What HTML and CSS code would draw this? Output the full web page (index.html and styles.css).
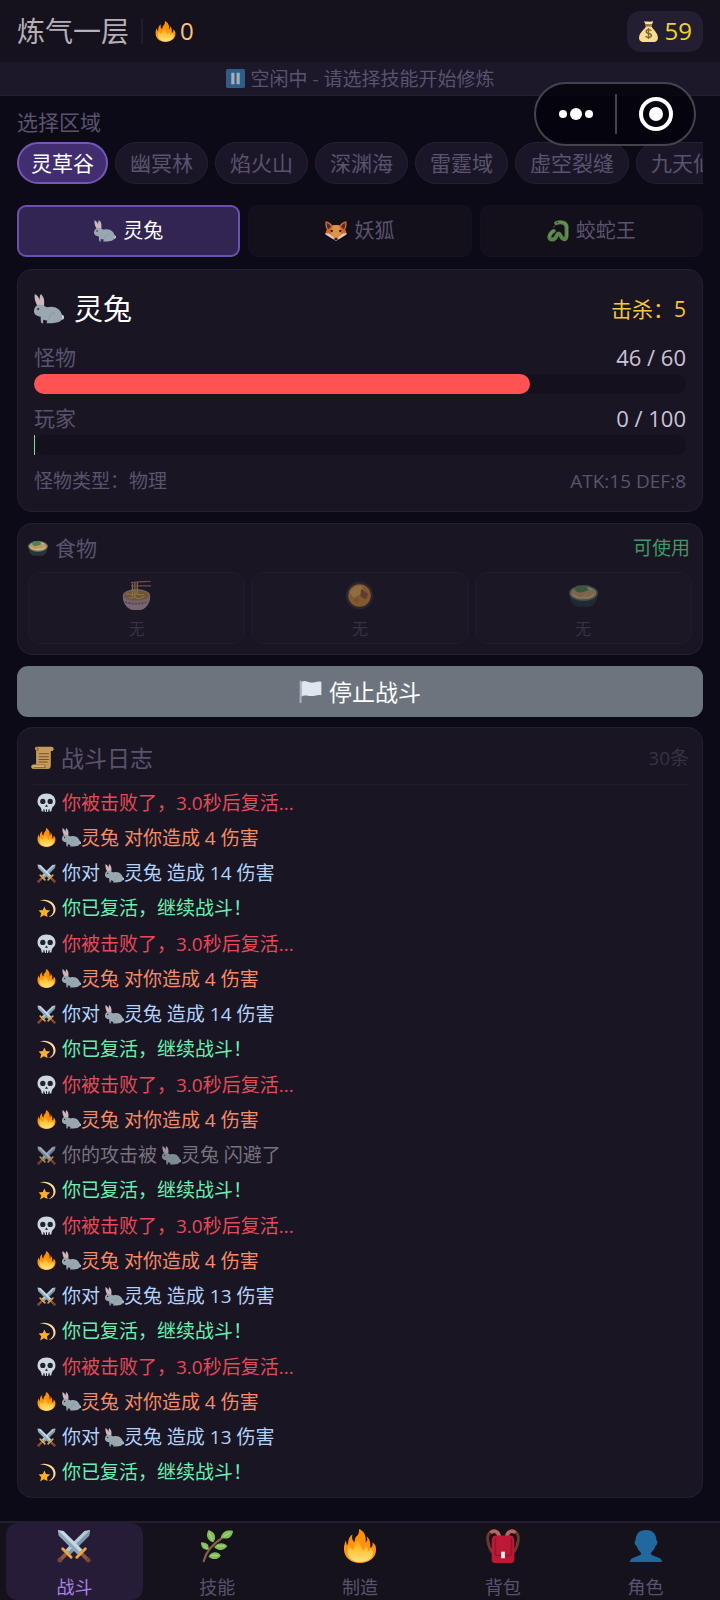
FILE: index.html
```html
<!DOCTYPE html>
<html lang="zh-CN">
<head>
<meta charset="utf-8">
<meta name="viewport" content="width=device-width, initial-scale=1">
<title>战斗</title>
<link rel="stylesheet" href="styles.css">
</head>
<body>
<svg class="sprite" aria-hidden="true">
  <defs>
    <linearGradient id="flame" x1="0" y1="0" x2="0" y2="1"><stop offset="0" stop-color="#ff8a00"/><stop offset="1" stop-color="#ff9d1e"/></linearGradient>
    <linearGradient id="core" x1="0" y1="0" x2="0" y2="1"><stop offset="0" stop-color="#ff9a1a"/><stop offset=".4" stop-color="#ffc233"/><stop offset="1" stop-color="#ffe082"/></linearGradient>
  </defs>
  <symbol id="fire" viewBox="0 0 36 36">
    <path fill="url(#flame)" d="M18 36C8 36 1 30 1 21c0-4 1-6 2-9l1 5c2-1 1-3 2-6 1-3 3-5 4-5-1 4 0 6 2 8 1-2 0-4 2-6 3-2 3-5 3-8 5 2 8 7 7 14 2-1 2-3 1-6 4 3 4 7 4 12 2-1 3-3 2-6 3 2 4 4 4 8 0 8-7 14-17 14z"/>
    <path fill="url(#core)" d="M18 35C10 35 5 30 5 24c0-3 1-5 2-6 1 2 2 4 4 4 1-4 2-8 6-10-1 4 3 6 4 11 2-1 3-3 3-5 2 2 3 4 2 6 2-1 3-2 3-4 2 2 3 3 3 5 0 6-6 10-14 10z"/>
  </symbol>
  <symbol id="bag" viewBox="0 0 36 36">
    <path fill="#f9dc8c" d="M14 9h9c2 5 10 10 11 18 1 6-3 9-7 9H9c-5 0-8-4-7-9C3 19 12 14 14 9z"/>
    <path fill="#fbe3a3" d="M10 0c3 2 5 0 8 1s5 0 8-1l-2 6H13z"/>
    <path fill="#a9743b" d="M12 6h12v3H12z"/>
    <path fill="none" stroke="#7d6440" stroke-width="2.4" d="M23 17c-2-3-9-3-9 1 0 5 9 2 9 7 0 4-8 4-10 1M18 12v19"/>
  </symbol>
  <symbol id="pause" viewBox="0 0 36 36">
    <rect width="36" height="36" rx="3" fill="#2d5d89"/><path fill="#a8acb4" d="M10 7h6v22h-6zM20 7h6v22h-6z"/>
  </symbol>
  <symbol id="rabbit" viewBox="0 0 36 36">
    <path fill="#b3bdc3" d="M1 0c4 2 6 6 7 13l-4 1C2 10 0 6 1 0zM8 0c4 3 5 8 4 14l-4 1C6 10 6 5 8 0z"/>
    <path fill="#e6adb4" d="M2 2c3 3 4 6 5 11l-2 1C3 10 2 7 2 2zM9 2c2 4 3 7 2 12l-2 1C8 10 8 6 9 2z"/>
    <circle cx="33" cy="28" r="3" fill="#dcd9dd"/>
    <path fill="#99a8b0" d="M5 13c5-1 8 2 11 3 9-3 18 3 18 12 0 3-2 5-5 6l-7 1h-7l1-3-5-1v4h-2c-1-2-1-5-1-8-5 0-8-3-8-6 0-4 2-7 5-8z"/>
    <circle cx="5" cy="18" r="1.2" fill="#202329"/><path fill="#d69da5" d="M0 21l2-1v2z"/>
    <path fill="none" stroke="#84949d" d="M18 31c0-5 3-8 7-9"/>
  </symbol>
  <symbol id="fox" viewBox="0 0 36 36">
    <path fill="#cf6a2c" d="M1 2c5 0 9 4 11 7 4-1 8-1 12 0 2-3 6-7 11-7 1 6 0 10-2 14l3 7-9 6-9 5-9-5-9-6 3-7C1 12 0 8 1 2z"/>
    <path fill="#4d2a2b" d="M3 5c3 1 5 3 7 6l-5 4C3 12 3 9 3 5zM33 5c-3 1-5 3-7 6l5 4c2-3 2-6 2-10z"/>
    <path fill="#dc9548" d="M13 9c3-1 7-1 10 0l4 10-2 9-7 5-7-5-2-9z"/>
    <path fill="#d9cfc7" d="M0 23c5-3 8-1 11 3l7 6 7-6c3-4 6-6 11-3l-8 5-10 6-10-6z"/>
    <circle cx="11" cy="18" r="2" fill="#30202a"/><circle cx="25" cy="18" r="2" fill="#30202a"/><ellipse cx="18" cy="31" rx="3" ry="2" fill="#30202a"/>
  </symbol>
  <symbol id="snake" viewBox="0 0 36 36">
    <path fill="none" stroke="#568347" stroke-width="6.5" stroke-linecap="round" stroke-linejoin="round" d="M15 5Q20 3 25 4 32 5 32 12V26Q31 33 27 31 23 29 22 25 19 19 16 25 14 31 9 32 3 32 4 27 5 21 11 18"/>
    <path fill="none" stroke="#6c9a55" stroke-width="2" stroke-linecap="round" d="M20 3Q31 3 33 12V27M4 29Q4 22 11 17"/>
    <path fill="none" stroke="#a53a3a" stroke-width="1.5" d="M14 9l-4 3"/><circle cx="17" cy="4" r="1" fill="#1b2a1b"/>
  </symbol>
  <symbol id="salad" viewBox="0 0 36 36">
    <path fill="#263539" d="M1 18h34c0 8-5 14-12 14H13C6 32 1 26 1 18z"/>
    <ellipse cx="18" cy="15" rx="18" ry="10" fill="#53686a"/><ellipse cx="18" cy="15" rx="16" ry="8" fill="#b99a69"/>
    <path fill="#4e8150" d="M8 12c-3-6 5-7 9-5 5-3 9 0 7 4-4 3-12 5-16 1z"/>
    <path fill="none" stroke="#d4b77b" stroke-width="2" d="M4 17c5 3 9 5 14 3 5 2 11 0 13-4M23 8l6 3"/>
    <ellipse cx="14" cy="18" rx="4" ry="2" fill="#d18a5e"/>
  </symbol>
  <symbol id="noodles" viewBox="0 0 36 36">
    <path fill="#b39ba4" d="M1 19h34c0 9-6 17-13 17h-8C7 36 1 28 1 19z"/>
    <ellipse cx="18" cy="18" rx="17" ry="8" fill="#a98d92"/><ellipse cx="18" cy="18" rx="15" ry="6" fill="#a87c3c"/>
    <path fill="none" stroke="#cfae5e" stroke-width="1.5" d="M5 17c4-4 7 3 11 0s7 3 12-1M8 20c4 3 7-1 10 1s7 0 10-2M13 3v16M16 2v18M19 2v14"/>
    <path stroke="#a87468" stroke-width="1.6" d="M11 2l25-2M11 6h25"/>
    <path fill="none" stroke="#85607a" stroke-width="2" stroke-dasharray="3 1" d="M4 26c7 3 21 3 28 0"/>
  </symbol>
  <symbol id="curry" viewBox="0 0 36 36">
    <circle cx="18" cy="18" r="17" fill="#35303a"/><circle cx="18" cy="18" r="14" fill="#c4863a"/>
    <path fill="#dda650" d="M6 15c2-7 9-11 16-8l-2 9-9 5z"/><path fill="#93553a" d="M20 10l9 6-3 7-7-4z"/><circle cx="14" cy="24" r="3" fill="#b47436"/>
  </symbol>
  <symbol id="flag" viewBox="0 0 36 36">
    <path fill="#a9b5bf" d="M1 1h3v35H1z"/><path fill="#e0e6ee" d="M4 3c6-4 10 2 17 1 5 0 9-3 14-1v21c-5-2-9 1-14 1-7 1-11-3-17 1z"/>
  </symbol>
  <symbol id="scroll" viewBox="0 0 36 36">
    <path fill="#c69b59" d="M9 1h23c4 0 5 6 1 7h-2v22c0 4-2 6-5 6H4c-5 0-5-7 0-7h4V7C5 5 6 1 9 1z"/>
    <path fill="#8e6740" d="M9 2c4 0 4 6 0 6zM3 29h20c-1 3 0 5 2 6H4c2-1 2-4-1-6z"/><path fill="#d8b271" d="M3 30h18v3H5z"/>
    <path stroke="#7c4b35" stroke-width="1.6" d="M12 12h16M12 17h16M12 21h16M12 25h14"/>
  </symbol>
  <symbol id="skull" viewBox="0 0 36 36">
    <path fill="#cdd7df" d="M18 1c10 0 17 6 17 15 0 5-2 8-5 10l-2 4-1 5h-4l-1-3-1 4h-6l-1-4-1 3H9l-1-5-2-4c-3-2-5-5-5-10C1 7 8 1 18 1z"/>
    <circle cx="11" cy="16" r="5" fill="#20232b"/><circle cx="25" cy="16" r="5" fill="#20232b"/><path fill="#20232b" d="M18 22l3 4h-6zM12 31h2v5h-2zM17 31h2v5h-2zM22 31h2v5h-2z"/>
  </symbol>
  <symbol id="swords" viewBox="0 0 36 36">
    <path fill="#b6cad6" d="M35 1l-1 6-20 20-5-5L29 2z"/><path fill="#7d98aa" d="M34 7L14 27l-2-3L34 2z"/>
    <path stroke="#94563d" stroke-width="4" d="M11 25l-8 8"/><path stroke="#e8a944" stroke-width="3" stroke-linecap="round" d="M6 21l9 9"/><circle cx="3" cy="33" r="2.5" fill="#7a4737"/>
    <path fill="#c5d7e1" d="M1 1l1 6 20 20 5-5L7 2z"/><path fill="#8ca7b9" d="M2 7l20 20 2-3L2 2z"/>
    <path stroke="#94563d" stroke-width="4" d="M25 25l8 8"/><path stroke="#e8a944" stroke-width="3" stroke-linecap="round" d="M30 21l-9 9"/><circle cx="33" cy="33" r="2.5" fill="#7a4737"/>
  </symbol>
  <symbol id="dizzy" viewBox="0 0 36 36">
    <path fill="#ffae2c" d="M14 14l3 7 8 1-6 5 1 7-7-3-7 4 2-8-5-5 8-1z"/>
    <path fill="#ffdb9a" d="M5 3C20-2 34 7 35 18c1 9-5 15-13 16 6-3 10-8 9-15C30 9 19 2 5 3z"/>
  </symbol>
  <symbol id="herb" viewBox="0 0 36 36">
    <path fill="none" stroke="#865c50" stroke-width="2.4" stroke-linecap="round" d="M4 34c2-10 8-17 20-25"/>
    <path fill="#83bd59" d="M9 1c7 2 9 8 5 13C7 12 6 6 9 1zM22 9c2-7 7-8 13-7-1 7-6 10-13 7zM1 14c7 0 9 3 8 8-5 0-8-2-8-8zM15 19c5-6 11-4 14-1-4 5-9 6-14 1zM9 29c4-6 10-5 13-1-3 5-9 5-13 1z"/>
    <path stroke="#bad996" d="M10 4l3 8M25 8l7-4M3 16l5 5M18 18h8M12 28h7"/>
  </symbol>
  <symbol id="backpack" viewBox="0 0 36 36">
    <path fill="none" stroke="#6f382c" stroke-width="3" d="M8 3C3 2 1 7 2 13q1 7 5 12M28 3c5-1 7 4 6 10q-1 7-5 12"/>
    <path fill="none" stroke="#b9665b" stroke-width="4" d="M5 4c3-3 8-2 9 4M31 4c-3-3-8-2-9 4"/>
    <path fill="#bd1834" d="M10 7h16c3 0 4 3 4 6v19c0 3-1 4-4 4H10c-3 0-4-1-4-4V13c0-3 1-6 4-6z"/>
    <path fill="none" stroke="#8d1730" stroke-width="1.6" d="M10 10v15c0 3 1 3 3 3h10c3 0 4 0 4-3V10"/><path fill="#f2eef0" d="M16 24h4v7h-4z"/>
  </symbol>
  <symbol id="person" viewBox="0 0 36 36">
    <path fill="#21689f" d="M18 1c7 0 11 4 11 11 2 1 1 5-1 6-1 4-4 6-5 8 1 4 12 3 12 9H1c0-6 11-5 12-9-1-2-4-4-5-8-2-1-3-5-1-6C7 5 11 1 18 1z"/>
  </symbol>
</svg>

<header class="topbar">
  <h1 class="realm">炼气一层</h1>
  <span class="streak"><svg class="icon"><use href="#fire"/></svg>0</span>
  <span class="coins"><svg class="icon"><use href="#bag"/></svg>59</span>
</header>
<div class="status"><svg class="icon"><use href="#pause"/></svg>空闲中 - 请选择技能开始修炼</div>
<div class="capsule">
  <button class="capsule-btn" aria-label="更多"><svg width="36" height="14" viewBox="0 0 36 14" fill="#fff"><circle cx="5" cy="7" r="4"/><circle cx="18" cy="7" r="6"/><circle cx="31" cy="7" r="4"/></svg></button>
  <button class="capsule-btn" aria-label="关闭"><svg width="34" height="34" viewBox="0 0 34 34" fill="#fff"><circle cx="17" cy="17" r="15" fill="none" stroke="#fff" stroke-width="4"/><circle cx="17" cy="17" r="7"/></svg></button>
</div>

<main class="page">
  <section class="regions">
    <h2 class="label">选择区域</h2>
    <div class="chips">
      <button class="chip active">灵草谷</button><button class="chip">幽冥林</button><button class="chip">焰火山</button><button class="chip">深渊海</button><button class="chip">雷霆域</button><button class="chip">虚空裂缝</button><button class="chip">九天仙域</button>
    </div>
  </section>
  <div class="enemies">
    <button class="enemy active"><svg class="icon"><use href="#rabbit"/></svg>灵兔</button>
    <button class="enemy"><svg class="icon"><use href="#fox"/></svg>妖狐</button>
    <button class="enemy"><svg class="icon"><use href="#snake"/></svg>蛟蛇王</button>
  </div>

  <section class="card battle">
    <div class="row battle-head"><h2 class="name"><svg class="icon"><use href="#rabbit"/></svg>灵兔</h2><span class="kills">击杀：5</span></div>
    <div class="row stat"><span>怪物</span><span class="value">46 / 60</span></div>
    <div class="bar"><div class="fill enemy-fill" style="width:76%"></div></div>
    <div class="row stat"><span>玩家</span><span class="value">0 / 100</span></div>
    <div class="bar"><div class="fill player-fill" style="width:0%"></div></div>
    <div class="row traits"><span>怪物类型：物理</span><span>ATK:15 DEF:8</span></div>
  </section>

  <section class="card food">
    <div class="row food-head"><h2 class="label food-title"><svg class="icon"><use href="#salad"/></svg>食物</h2><span class="ready">可使用</span></div>
    <div class="slots">
      <button class="slot"><svg class="icon"><use href="#noodles"/></svg>无</button>
      <button class="slot"><svg class="icon"><use href="#curry"/></svg>无</button>
      <button class="slot"><svg class="icon"><use href="#salad"/></svg>无</button>
    </div>
  </section>

  <button class="stop"><svg class="icon"><use href="#flag"/></svg>停止战斗</button>

  <section class="card log">
    <div class="row log-head"><h2 class="log-title"><svg class="icon"><use href="#scroll"/></svg>战斗日志</h2><span class="count">30条</span></div>
    <ul class="entries">
      <li class="entry defeat"><svg class="icon"><use href="#skull"/></svg>你被击败了，3.0秒后复活...</li>
      <li class="entry hurt"><svg class="icon"><use href="#fire"/></svg><svg class="icon mob"><use href="#rabbit"/></svg>灵兔 对你造成 4 伤害</li>
      <li class="entry hit"><svg class="icon"><use href="#swords"/></svg>你对 <svg class="icon mob"><use href="#rabbit"/></svg>灵兔 造成 14 伤害</li>
      <li class="entry revive"><svg class="icon"><use href="#dizzy"/></svg>你已复活，继续战斗！</li>
      <li class="entry defeat"><svg class="icon"><use href="#skull"/></svg>你被击败了，3.0秒后复活...</li>
      <li class="entry hurt"><svg class="icon"><use href="#fire"/></svg><svg class="icon mob"><use href="#rabbit"/></svg>灵兔 对你造成 4 伤害</li>
      <li class="entry hit"><svg class="icon"><use href="#swords"/></svg>你对 <svg class="icon mob"><use href="#rabbit"/></svg>灵兔 造成 14 伤害</li>
      <li class="entry revive"><svg class="icon"><use href="#dizzy"/></svg>你已复活，继续战斗！</li>
      <li class="entry defeat"><svg class="icon"><use href="#skull"/></svg>你被击败了，3.0秒后复活...</li>
      <li class="entry hurt"><svg class="icon"><use href="#fire"/></svg><svg class="icon mob"><use href="#rabbit"/></svg>灵兔 对你造成 4 伤害</li>
      <li class="entry miss"><svg class="icon"><use href="#swords"/></svg>你的攻击被 <svg class="icon mob"><use href="#rabbit"/></svg>灵兔 闪避了</li>
      <li class="entry revive"><svg class="icon"><use href="#dizzy"/></svg>你已复活，继续战斗！</li>
      <li class="entry defeat"><svg class="icon"><use href="#skull"/></svg>你被击败了，3.0秒后复活...</li>
      <li class="entry hurt"><svg class="icon"><use href="#fire"/></svg><svg class="icon mob"><use href="#rabbit"/></svg>灵兔 对你造成 4 伤害</li>
      <li class="entry hit"><svg class="icon"><use href="#swords"/></svg>你对 <svg class="icon mob"><use href="#rabbit"/></svg>灵兔 造成 13 伤害</li>
      <li class="entry revive"><svg class="icon"><use href="#dizzy"/></svg>你已复活，继续战斗！</li>
      <li class="entry defeat"><svg class="icon"><use href="#skull"/></svg>你被击败了，3.0秒后复活...</li>
      <li class="entry hurt"><svg class="icon"><use href="#fire"/></svg><svg class="icon mob"><use href="#rabbit"/></svg>灵兔 对你造成 4 伤害</li>
      <li class="entry hit"><svg class="icon"><use href="#swords"/></svg>你对 <svg class="icon mob"><use href="#rabbit"/></svg>灵兔 造成 13 伤害</li>
      <li class="entry revive"><svg class="icon"><use href="#dizzy"/></svg>你已复活，继续战斗！</li>
    </ul>
  </section>
</main>

<nav class="tabbar">
  <a class="tab active" href="#battle"><svg class="icon"><use href="#swords"/></svg>战斗</a>
  <a class="tab" href="#skills"><svg class="icon"><use href="#herb"/></svg>技能</a>
  <a class="tab" href="#craft"><svg class="icon"><use href="#fire"/></svg>制造</a>
  <a class="tab" href="#items"><svg class="icon"><use href="#backpack"/></svg>背包</a>
  <a class="tab" href="#role"><svg class="icon"><use href="#person"/></svg>角色</a>
</nav>
</body>
</html>
```
FILE: styles.css
```css
* { box-sizing: border-box; }

body {
  margin: 0;
  min-height: 100vh;
  display: flex;
  flex-direction: column;
  position: relative;
  background: #0d0a17;
  color: #5a536e;
  font: 400 19px/28px "Open Sans", "Noto Sans CJK SC", sans-serif;
}

h1, h2, ul { margin: 0; padding: 0; font-weight: inherit; list-style: none; }
button { margin: 0; padding: 0; border: 0; background: none; color: inherit; font: inherit; cursor: pointer; }
a { color: inherit; text-decoration: none; }
.sprite { position: absolute; width: 0; height: 0; }
.icon { width: 1em; height: 1em; flex: none; }

.topbar { display: flex; align-items: center; height: 62px; padding: 0 17px; background: #15121d; }
.realm { font-size: 28px; color: #b5afb6; }
.streak { display: flex; align-items: center; gap: 4px; margin-left: 12px; padding-left: 12px; border-left: 2px solid #211c2d; font-size: 24px; line-height: 26px; color: #ffc27a; }
.streak .icon, .coins .icon { width: 21px; height: 21px; }
.coins { display: flex; align-items: center; gap: 6px; height: 41px; margin-left: auto; padding: 0 11px; border-radius: 14px; background: #241e32; font-size: 24px; color: #efd52b; }

.status { display: flex; align-items: center; justify-content: center; gap: 6px; height: 34px; border-bottom: 1px solid #241e33; background: #1d172a; }

.capsule { position: absolute; top: 82px; right: 24px; display: flex; width: 162px; height: 64px; border: 2px solid #45434b; border-radius: 32px; background: rgba(4, 3, 10, 0.8); }
.capsule-btn { flex: 1; display: flex; align-items: center; justify-content: center; }
.capsule-btn + .capsule-btn::before { content: ""; width: 2px; height: 40px; margin-right: 22px; background: #45434b; }
.capsule-btn + .capsule-btn { justify-content: flex-start; }

.page { flex: 1; display: flex; flex-direction: column; padding: 12px 17px 23px; }
.label { font-size: 21px; line-height: 28px; }
.chips { display: flex; gap: 7px; margin-top: 6px; overflow: hidden; }
.chip { flex: none; height: 42px; padding: 0 14px; border: 1px solid #251f32; border-radius: 21px; background: #1b1627; font-size: 21px; }
.chip.active { border: 2px solid #7557b8; padding: 0 12px; background: #412e71; color: #fff; }

.enemies { display: grid; grid-template-columns: repeat(3, 1fr); gap: 8px; margin-top: 21px; }
.enemy { display: flex; align-items: center; justify-content: center; gap: 7px; height: 52px; border: 1px solid #15111e; border-radius: 9px; background: #13101c; font-size: 20px; }
.enemy .icon { width: 22px; height: 22px; }
.enemy.active { border: 2px solid #6c50ae; background: #322553; color: #fff; }

.card { border: 1px solid #252030; border-radius: 15px; background: #1a1523; }
.row { display: flex; align-items: center; justify-content: space-between; }

.battle { margin-top: 12px; padding: 16px; }
.battle-head { height: 47px; padding-bottom: 2px; }
.name { display: flex; align-items: center; gap: 10px; font-size: 29px; color: #fff; }
.name .icon { width: 30px; height: 30px; }
.kills { font-size: 21px; color: #f4c73b; }
.stat { height: 41px; padding-top: 6px; font-size: 21px; }
.value { font-size: 22px; color: #cbc3da; }
.bar { height: 20px; border-radius: 10px; background: #15111c; }
.fill { height: 100%; border-radius: 10px; }
.enemy-fill { background: #ff5252; }
.player-fill { min-width: 1px; border-radius: 0; background: #6fe39b; }
.traits { margin-top: 12px; }

.food { margin-top: 11px; padding: 10px; }
.food-title { display: flex; align-items: center; gap: 7px; }
.food-title .icon { width: 20px; height: 20px; }
.ready { margin-right: 2px; color: #429767; }
.slots { display: grid; grid-template-columns: repeat(3, 1fr); gap: 6px; margin-top: 10px; }
.slot { display: flex; flex-direction: column; align-items: center; justify-content: space-between; height: 72px; padding: 8px 0 1px; border: 1px solid #211c2b; border-radius: 12px; background: #1b1724; font-size: 16px; line-height: 26px; color: #37323f; }
.slot .icon { width: 29px; height: 29px; opacity: 0.6; }

.stop { display: flex; align-items: center; justify-content: center; gap: 7px; height: 51px; margin-top: 11px; border-radius: 11px; background: #6c747d; font-size: 23px; color: #fff; }

.log { flex: 1; display: flex; flex-direction: column; margin-top: 10px; padding: 13px 13px 7px; }
.log-head { height: 44px; padding-bottom: 10px; border-bottom: 1px solid #211c2a; }
.log-title { display: flex; align-items: center; gap: 7px; font-size: 23px; }
.count { color: #38323f; }
.entries { flex: 1; display: grid; grid-auto-rows: 1fr; padding-left: 6px; }
.entry { display: flex; align-items: center; white-space: pre; }
.entry .icon { margin-right: 6px; }
.entry .icon.mob { margin-right: 0; }
.defeat { color: #e44a58; }
.hurt { color: #f58b68; }
.hit { color: #b2d3fb; }
.revive { color: #69f0ae; }
.miss { color: #77727c; }
.miss .icon { opacity: 0.8; }

.tabbar { display: grid; grid-template-columns: repeat(5, 1fr); gap: 6px; height: 79px; padding: 0 6px; border-top: 2px solid #241f2e; background: #15121c; }
.tab { display: flex; flex-direction: column; align-items: center; justify-content: space-between; padding: 6px 0 0; border-radius: 12px; font-size: 18px; line-height: 26px; }
.tab .icon { width: 34px; height: 34px; }
.tab.active { background: #261c37; color: #a783e2; }
```
